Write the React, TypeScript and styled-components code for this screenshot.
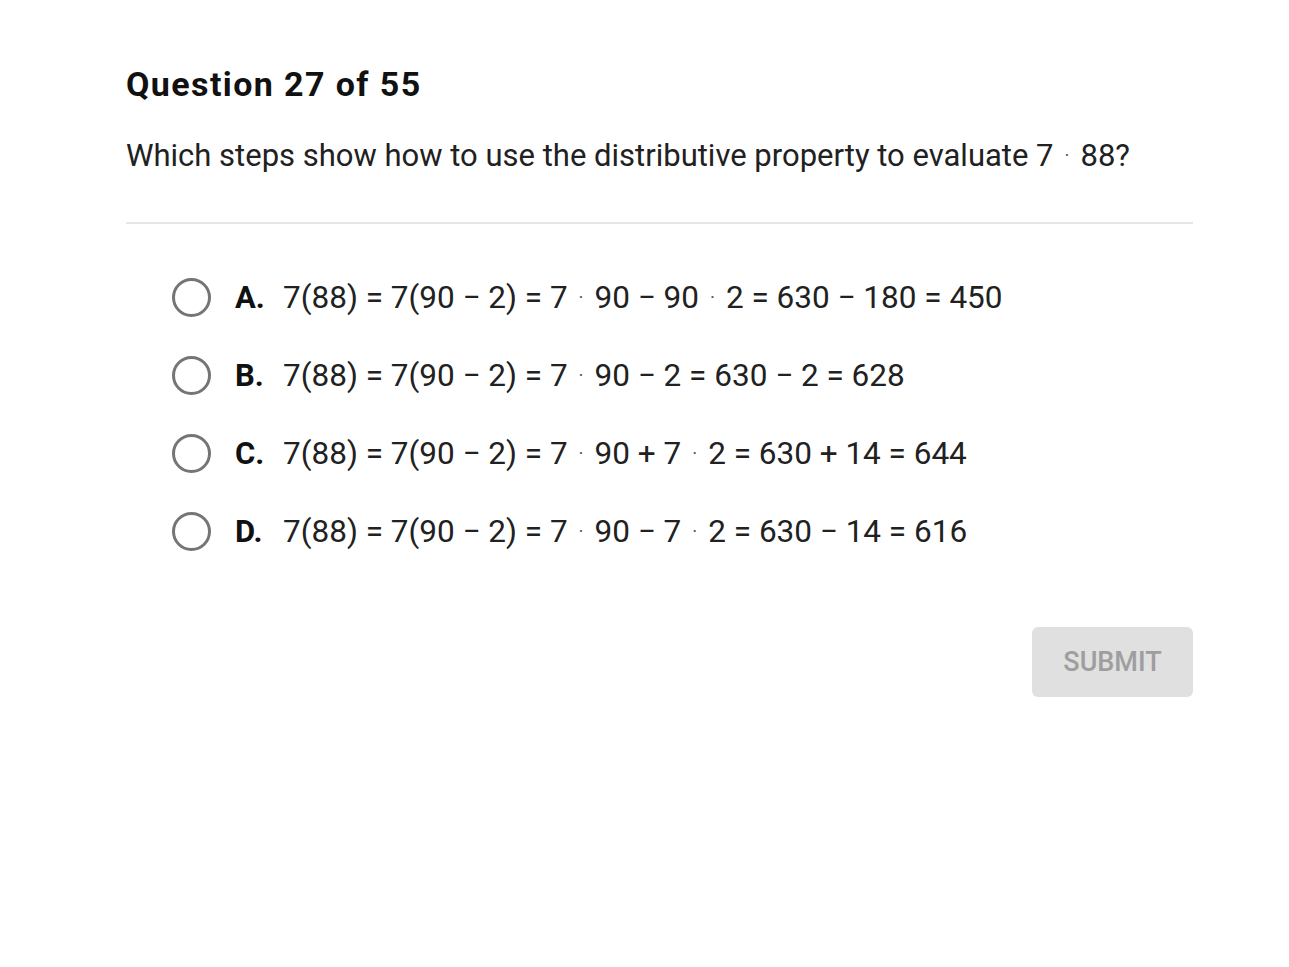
import React from 'react';
import styled, { createGlobalStyle } from 'styled-components';

const GlobalStyle = createGlobalStyle`
  body {
    margin: 0;
    background: #fff;
    font-family: Roboto, "Liberation Sans", sans-serif;
    color: #212121;
  }
`;

interface Choice {
  letter: string;
  parts: string[];
}

const choices: Choice[] = [
  { letter: 'A.', parts: ['7(88) = 7(90 − 2) = 7', '90 − 90', '2 = 630 − 180 = 450'] },
  { letter: 'B.', parts: ['7(88) = 7(90 − 2) = 7', '90 − 2 = 630 − 2 = 628'] },
  { letter: 'C.', parts: ['7(88) = 7(90 − 2) = 7', '90 + 7', '2 = 630 + 14 = 644'] },
  { letter: 'D.', parts: ['7(88) = 7(90 − 2) = 7', '90 − 7', '2 = 630 − 14 = 616'] },
];

const App = () => {
  return (
    <>
      <GlobalStyle />
      <Page>
        <Title>Question 27 of 55</Title>
        <Prompt>
          Which steps show how to use the distributive property to evaluate 7
          <Dot>·</Dot>88?
        </Prompt>
        <Divider />
        <Options>
          {choices.map((c) => (
            <Option key={c.letter}>
              <Radio />
              <Letter>{c.letter}</Letter>
              <Expr>
                {c.parts.map((p, i) => (
                  <React.Fragment key={i}>
                    {i > 0 && <Dot>·</Dot>}
                    {p}
                  </React.Fragment>
                ))}
              </Expr>
            </Option>
          ))}
        </Options>
        <Footer>
          <Submit disabled>SUBMIT</Submit>
        </Footer>
      </Page>
    </>
  );
};

export default App;

const Page = styled.div`
  width: 1067px;
  margin-left: 126px;
  padding-top: 64px;
`;

const Title = styled.h1`
  margin: 0;
  font-size: 34px;
  font-weight: 700;
  letter-spacing: 1.4px;
  line-height: 40px;
  color: #111;
`;

const Prompt = styled.p`
  margin: 32px 0 0;
  font-size: 31px;
  line-height: 40px;
  color: #212121;
`;

const Dot = styled.span`
  display: inline-block;
  margin: 0 11px;
  font-size: 19px;
  vertical-align: 4px;
  color: #555;
`;

const Divider = styled.hr`
  margin: 46px 0 0;
  border: none;
  border-top: 2px solid #e6e6e6;
`;

const Options = styled.div`
  display: flex;
  flex-direction: column;
  gap: 38px;
  padding: 53px 0 0 46px;
`;

const Option = styled.div`
  display: flex;
  align-items: center;
  height: 40px;
`;

const Radio = styled.span`
  box-sizing: border-box;
  width: 39px;
  height: 39px;
  border: 3.5px solid #757575;
  border-radius: 50%;
  flex-shrink: 0;
`;

const Letter = styled.span`
  margin-left: 24px;
  width: 48px;
  font-size: 31px;
  font-weight: 700;
  color: #111;
`;

const Expr = styled.span`
  font-size: 31.5px;
  color: #212121;
  white-space: nowrap;
`;

const Footer = styled.div`
  display: flex;
  justify-content: flex-end;
  margin-top: 76px;
`;

const Submit = styled.button`
  width: 161px;
  height: 70px;
  border: none;
  border-radius: 6px;
  background: #e0e0e0;
  color: #9e9e9e;
  font-family: Roboto, "Liberation Sans", sans-serif;
  font-size: 27px;
  font-weight: 500;
`;
